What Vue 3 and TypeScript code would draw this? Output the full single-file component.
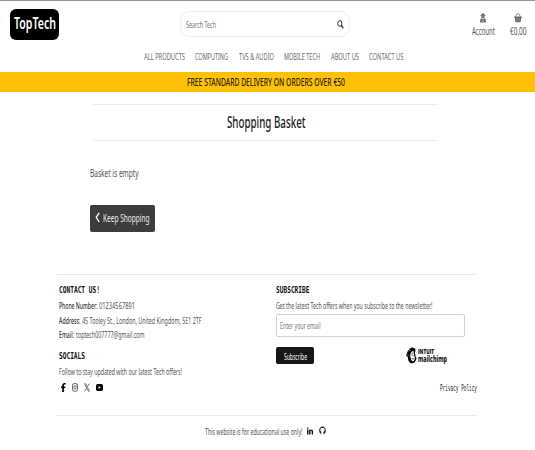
<script setup lang="ts">
import { h, type FunctionalComponent, type VNode } from 'vue'

interface FitProps { t: string; w: number }

// Condenses the text so that it fills the width of its box.
function squeeze(vnode: VNode) {
  const box = vnode.el as HTMLElement
  const inner = box.firstElementChild as HTMLElement
  const natural = inner.getBoundingClientRect().width
  if (natural > 0) inner.style.transform = `scaleX(${box.getBoundingClientRect().width / natural})`
}

const Fit: FunctionalComponent<FitProps> = (props) =>
  h('span', { class: 'fit', style: { width: `${props.w}px` }, onVnodeMounted: squeeze }, [
    h('span', { class: 'fit-text' }, props.t),
  ])
Fit.props = ['t', 'w']

const nav: FitProps[] = [
  { t: 'ALL PRODUCTS', w: 41 },
  { t: 'COMPUTING', w: 33 },
  { t: 'TVS & AUDIO', w: 35 },
  { t: 'MOBILE TECH', w: 36 },
  { t: 'ABOUT US', w: 28 },
  { t: 'CONTACT US', w: 34.5 },
]

const contacts = [
  { label: 'Phone Number:', lw: 38.5, value: '01234567891', vw: 36 },
  { label: 'Address:', lw: 21.5, value: '45 Tooley St., London, United Kingdom, SE1 2TF', vw: 119.5 },
  { label: 'Email:', lw: 15, value: 'toptech007777@gmail.com', vw: 68.5 },
]
</script>

<template>
  <div class="page">
    <header class="top">
      <a class="logo"><Fit t="TopTech" :w="42" /></a>
      <div class="search">
        <Fit t="Search Tech" :w="30" />
        <svg class="glass" width="7" height="9" viewBox="0 0 7 9">
          <ellipse cx="2.8" cy="3.5" rx="2.1" ry="2.8" fill="none" stroke="#222" stroke-width="1" />
          <path d="M4.3 5.7L6.3 8.2" stroke="#222" stroke-width="1.3" />
        </svg>
      </div>
      <div class="account">
        <svg width="8" height="10" viewBox="0 0 8 10" fill="#6b6b6b">
          <path d="M2.5 1Q4-.5 5.5 1L5.7 2H6.5V2.7H5.8V4Q5.3 5.3 4 5.3T2.2 4V2.7H1.5V2H2.3Z" />
          <path d="M2.1 5L4 6.3L5.9 5Q7 6 7 9.5H1Q1 6 2.1 5Z" />
          <path d="M2.7 3.1H5.3M3.2 7.4H4.8M3 8.6H5" stroke="#ddd" stroke-width=".5" />
        </svg>
        <Fit t="Account" :w="23" />
      </div>
      <div class="basket">
        <svg width="8" height="10" viewBox="0 0 8 10">
          <path d="M1.5 4L3 .8Q4 .2 5 .8L6.5 4" fill="none" stroke="#777" stroke-width=".8" />
          <path d="M.2 3.4H7.8V4.8H7.2L6.6 9.2H1.4L.8 4.8H.2Z" fill="#6b6b6b" />
          <path d="M2.7 5.4V8.2M4 5.4V8.2M5.3 5.4V8.2" stroke="#bbb" stroke-width=".35" />
        </svg>
        <Fit t="€0.00" :w="16.5" />
      </div>
    </header>

    <nav class="nav">
      <Fit v-for="item in nav" :key="item.t" :t="item.t" :w="item.w" />
    </nav>

    <div class="banner"><Fit t="FREE STANDARD DELIVERY ON ORDERS OVER €50" :w="158" /></div>

    <main class="main">
      <h1 class="title"><Fit t="Shopping Basket" :w="78.5" /></h1>
      <p class="empty"><Fit t="Basket is empty" :w="48.5" /></p>
      <button class="keep">
        <svg width="5" height="11" viewBox="0 0 5 11">
          <path d="M4.2.8L1.2 5.3L4.2 10" fill="none" stroke="#fff" stroke-width="1.3" />
        </svg>
        <Fit t="Keep Shopping" :w="46.5" />
      </button>
    </main>

    <footer class="footer">
      <div class="columns">
        <section class="contact">
          <h2><Fit t="CONTACT US!" :w="41" /></h2>
          <p v-for="c in contacts" :key="c.label" class="line">
            <b><Fit :t="c.label" :w="c.lw" /></b>
            <Fit :t="c.value" :w="c.vw" />
          </p>
          <h2 class="socials"><Fit t="SOCIALS" :w="26" /></h2>
          <p class="follow"><Fit t="Follow to stay updated with our latest Tech offers!" :w="123" /></p>
          <div class="icons">
            <svg width="5" height="9" viewBox="0 0 5 9">
              <path d="M1.2 9V5H0V3.5H1.2V2.5Q1.2 0 3.3 0H4.6V1.4H3.7Q2.9 1.4 2.9 2.4V3.5H4.5L4.2 5H2.9V9Z" />
            </svg>
            <svg width="6" height="9" viewBox="0 0 6 9" fill="none" stroke="#444" stroke-width=".75">
              <rect x=".5" y=".6" width="5" height="7.6" rx="1.5" />
              <ellipse cx="3" cy="4.4" rx="1.2" ry="1.8" />
              <path d="M4.2 2H4.7" />
            </svg>
            <svg width="6" height="9" viewBox="0 0 6 9" fill="none" stroke="#333">
              <path d="M.5 .7H1.7L5.5 8.2H4.3Z" stroke-width=".6" />
              <path d="M5.4.6L3.4 3.7M2.6 5.1L.5 8.3" stroke-width=".7" />
            </svg>
            <svg width="7" height="9" viewBox="0 0 7 9">
              <rect y="1" width="7" height="7" rx="1.7" />
              <path d="M2.7 3V6L4.8 4.5Z" fill="#fff" />
            </svg>
          </div>
        </section>

        <section class="subscribe">
          <h2><Fit t="SUBSCRIBE" :w="33.5" /></h2>
          <p class="line"><Fit t="Get the latest Tech offers when you subscribe to the newsletter!" :w="156.5" /></p>
          <div class="email"><Fit t="Enter your email" :w="40.5" /></div>
          <div class="actions">
            <button class="send"><Fit t="Subscribe" :w="23" /></button>
            <div class="chimp">
              <svg width="11" height="17" viewBox="0 0 11 17">
                <path d="M2 10Q0 10 .3 7.8Q1 4 4 1.5Q6.5-.5 8 1.2Q9.7.8 9.4 3Q9.4 5 8.8 6.3Q9.8 8 9.5 10Q11 10.5 10.3 12.2Q9 16 5.8 16.3Q2.7 16 2 12Z" />
                <path d="M4.4 6.8Q5.6 3.6 7.7 4.1L8 7.2L8.7 10.2L9 11.5Q8.5 14.2 6.4 14.2Q4.9 13.6 4.6 10.8Q3.8 9 4.4 6.8Z" fill="#fff" />
                <path d="M5 7.6Q6.5 5.5 7.7 6M5.8 8.5H6.7M7.4 8.4H8M5.8 11.6Q7 12.8 8.3 11.2" fill="none" stroke="#000" stroke-width=".7" />
                <path d="M1.3 8.6Q1.8 6.8 2.8 8.6M2.9 4.5L4.4 2.9" fill="none" stroke="#fff" stroke-width=".6" />
              </svg>
              <div class="words">
                <Fit class="intuit" t="INTUIT" :w="16" />
                <Fit class="mail" t="mailchimp" :w="29" />
              </div>
            </div>
          </div>
          <a class="privacy"><Fit t="Privacy Policy" :w="37" /></a>
        </section>
      </div>

      <div class="note">
        <Fit t="This website is for educational use only!" :w="97.5" />
        <svg class="in" width="6" height="8" viewBox="0 0 6 8" fill="#111">
          <path d="M0 2.5H1.4V7.5H0ZM0 .4H1.4V1.7H0ZM2.1 2.5H3.4V3.2Q6 1.4 6 4.5V7.5H4.7V4.8Q4.7 3.4 3.5 4.1V7.5H2.1Z" />
        </svg>
        <svg width="7" height="9" viewBox="0 0 7 9">
          <path d="M3.5.4C1.5.4.2 2.2.2 4.5C.2 6.4 1.2 7.9 2.4 8.4V7.4Q1.6 7.5 1.2 6.6Q1.7 6.7 2.4 6.6L2.6 5.9Q1.3 5.5 1.3 3.9Q1.3 3.1 1.7 2.6L1.8 1.6L2.7 2H4.3L5.2 1.6L5.3 2.6Q5.7 3.1 5.7 3.9Q5.7 5.5 4.4 5.9L4.6 6.6V8.4C5.8 7.9 6.8 6.4 6.8 4.5C6.8 2.2 5.5.4 3.5.4Z" fill="#111" />
        </svg>
      </div>
    </footer>
  </div>
</template>

<style>
body { background: #fff; }
.fit { display: block; flex: none; height: 12px; line-height: 0; white-space: nowrap; text-align: left; }
.fit-text { display: inline-block; transform-origin: 0 0; }
.fit-text::before { content: ""; display: inline-block; height: 9px; }
</style>

<style scoped>
.page {
  box-sizing: border-box;
  width: 535px;
  height: 450px;
  overflow: hidden;
  border-top: 1px solid #999;
  background: #fff;
  color: #555;
  font-family: "Noto Sans", "Open Sans", sans-serif;
  font-size: 8.5px;
}
h1, h2, p { margin: 0; font-weight: 400; }
button { border: 0; padding: 0; font-family: inherit; }
svg { display: block; flex: none; }

.top { display: flex; height: 50px; }
.logo {
  box-sizing: border-box;
  width: 49px;
  height: 31px;
  margin: 8px 0 0 10px;
  padding: 11px 0 0 3.5px;
  border-radius: 6px;
  background: #000;
  color: #fff;
  font-size: 15.5px;
  font-weight: 600;
}
.search {
  box-sizing: border-box;
  display: flex;
  align-items: flex-start;
  justify-content: space-between;
  width: 170px;
  height: 26px;
  margin: 10px 0 0 121px;
  padding: 7px 5px 0 5px;
  border: 1px solid #eee;
  border-radius: 10px;
  color: #777;
}
.glass { margin-top: 1px; }
.account, .basket { display: flex; flex-direction: column; align-items: center; gap: 3px; padding-top: 12px; font-size: 10px; }
.account { margin-left: 121.5px; }
.basket { margin-left: 15px; }

.nav { display: flex; gap: 10.6px; height: 21px; padding-left: 143.5px; color: #6b6b6b; font-size: 8.5px; }
.banner { box-sizing: border-box; height: 20px; padding: 5px 0 0 186.5px; background: #ffc107; color: #2b2410; font-size: 10.5px; font-weight: 500; }

.main { box-sizing: border-box; height: 182px; padding: 12px 97px 0 90px; }
.title { box-sizing: border-box; height: 37px; margin-left: 3px; padding: 14px 0 0 133.5px; border: solid #e9ecef; border-width: 1px 0; color: #1b1e21; font-size: 15.5px; font-weight: 500; }
.empty { padding-top: 27px; font-size: 11px; }
.keep { display: flex; align-items: flex-start; gap: 2.5px; box-sizing: border-box; width: 65px; height: 27px; margin-top: 25px; padding: 7px 0 0 5px; border-radius: 2px; background: #3d3d3d; color: #eee; font-size: 11px; }
.keep .fit { margin-top: 1px; }

.footer { width: 420px; margin-left: 57px; border-top: 1px solid #e8e8e8; }
.columns { display: flex; height: 140px; border-bottom: 1px solid #eaeaea; }
.contact { width: 217px; padding: 9px 0 0 2px; }
h2 { color: #111; font-family: "DejaVu Sans Mono", monospace; font-size: 9.2px; font-weight: 700; }
.line { display: flex; gap: 1.5px; height: 12px; margin-top: 2.5px; }
h2 + .line { margin-top: 4px; }
b { color: #333; font-weight: 500; }
.socials { margin-top: 9px; }
.follow { margin-top: 4px; }
.icons { display: flex; gap: 6px; padding: 4.5px 0 0 2px; }

.subscribe { flex: 1; padding-top: 9px; }
.email { box-sizing: border-box; width: 189px; height: 23px; margin-top: 2px; padding: 5px 0 0 3px; border: 1px solid #d2d2d2; border-radius: 2px; color: #777; }
.actions { display: flex; align-items: flex-start; gap: 92px; padding-top: 10px; }
.send { box-sizing: border-box; width: 38px; height: 17px; padding: 2.5px 0 0 7.5px; border-radius: 2px; background: #161616; color: #fff; font-size: 8.5px; }
.chimp { display: flex; gap: 1px; color: #111; font-weight: 800; }
.words { height: 17px; }
.intuit { margin-top: -2.5px; font-family: "Open Sans", sans-serif; font-size: 7px; }
.mail { margin-top: -3.5px; font-size: 8.5px; }
.privacy { display: flex; justify-content: flex-end; margin-top: 18px; color: #222; font-family: "DejaVu Sans Mono", monospace; font-size: 8px; }

.note { display: flex; align-items: flex-start; gap: 6px; padding: 10px 0 0 148px; }
.in { margin: 1px 0 0 -2px; }
</style>
